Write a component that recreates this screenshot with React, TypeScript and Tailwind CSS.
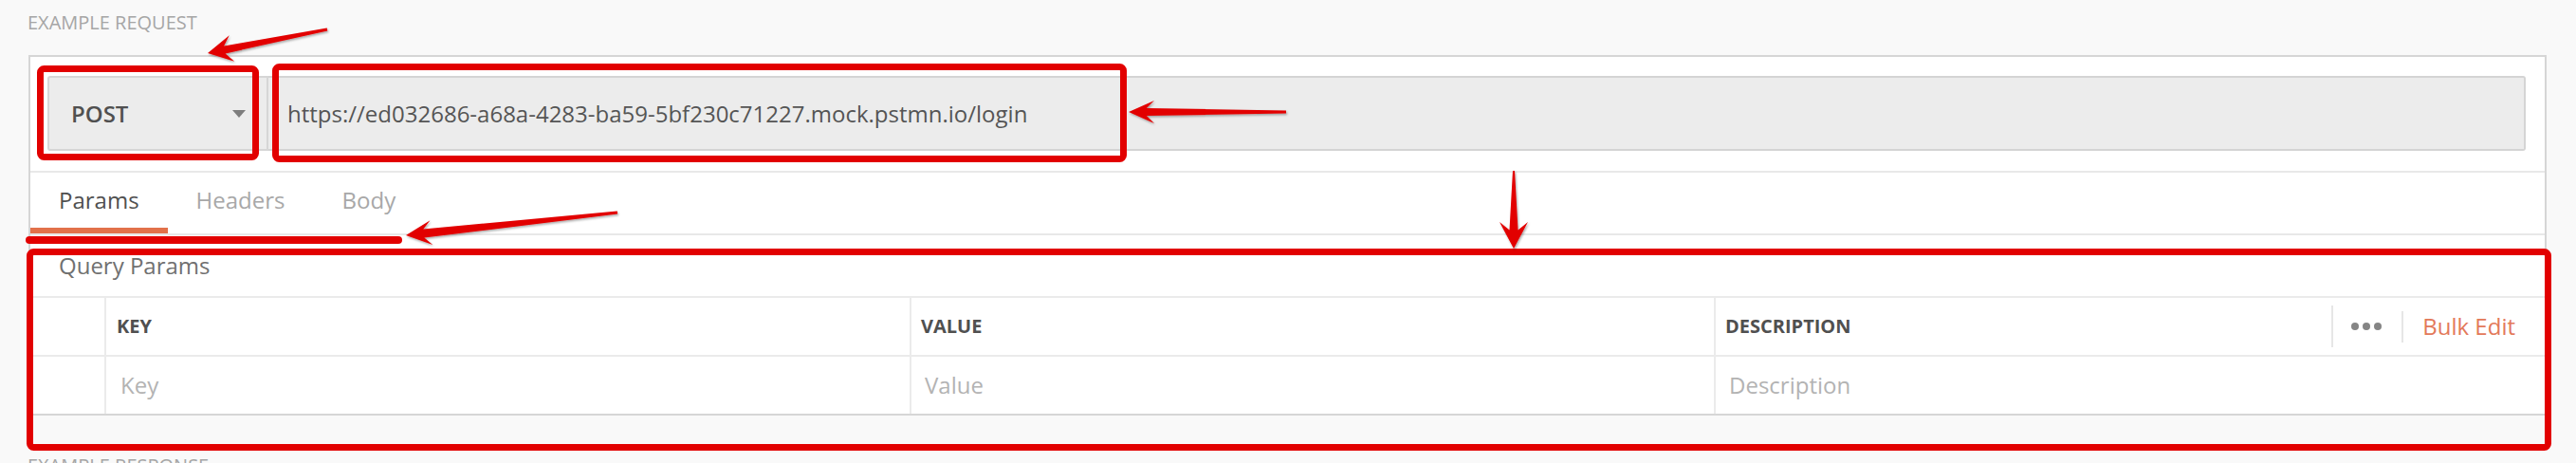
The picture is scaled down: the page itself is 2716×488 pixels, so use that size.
import React from "react";

type Pt = { x: number; y: number };

// tapered "swoosh" arrow, built from tail/tip and a few sizes
function arrowPoints(tail: Pt, tip: Pt, headLen: number, headHalf: number, neck: number, tailHalf: number) {
    const dx = tip.x - tail.x;
    const dy = tip.y - tail.y;
    const len = Math.hypot(dx, dy);
    const ux = dx / len;
    const uy = dy / len;
    const nx = -uy;
    const ny = ux;
    const bx = tip.x - ux * headLen;
    const by = tip.y - uy * headLen;
    const kx = tip.x - ux * headLen * 0.7;
    const ky = tip.y - uy * headLen * 0.7;
    const pts: [number, number][] = [
        [tip.x, tip.y],
        [bx + nx * headHalf, by + ny * headHalf],
        [kx + nx * neck, ky + ny * neck],
        [tail.x + nx * tailHalf, tail.y + ny * tailHalf],
        [tail.x - nx * tailHalf, tail.y - ny * tailHalf],
        [kx - nx * neck, ky - ny * neck],
        [bx - nx * headHalf, by - ny * headHalf],
    ];
    return pts.map(([x, y]) => `${x.toFixed(1)},${y.toFixed(1)}`).join(" ");
}

const ARROWS = [
    { tail: { x: 345, y: 31 }, tip: { x: 219, y: 56 }, head: 26, half: 14, neck: 4, tailHalf: 1.5 },
    { tail: { x: 1356, y: 118 }, tip: { x: 1190, y: 118 }, head: 27, half: 12, neck: 4, tailHalf: 1.5 },
    { tail: { x: 651, y: 224 }, tip: { x: 428, y: 248 }, head: 27, half: 13, neck: 4.5, tailHalf: 1.5 },
    { tail: { x: 1596, y: 180 }, tip: { x: 1596, y: 262 }, head: 28, half: 15, neck: 4.5, tailHalf: 1 },
];

function Annotations() {
    return (
        <svg
            className="pointer-events-none absolute left-0 top-0"
            width={2716}
            height={488}
            viewBox="0 0 2716 488"
        >
            <defs>
                <filter id="shade" x="-10%" y="-50%" width="120%" height="200%">
                    <feDropShadow dx="1" dy="1.5" stdDeviation="1" floodColor="#000" floodOpacity="0.35" />
                </filter>
            </defs>
            <g fill="none" stroke="#e20000" strokeWidth={7}>
                <rect x={42.5} y={72.5} width={227} height={93} rx={4} />
                <rect x={290.5} y={70.5} width={894} height={97} rx={4} />
                <rect x={31.5} y={265.5} width={2655} height={206} rx={4} />
            </g>
            <line x1={31} y1={253} x2={420} y2={253} stroke="#e20000" strokeWidth={8} strokeLinecap="round" />
            <g fill="#e20000" filter="url(#shade)">
                {ARROWS.map((a, i) => (
                    <polygon key={i} points={arrowPoints(a.tail, a.tip, a.head, a.half, a.neck, a.tailHalf)} />
                ))}
            </g>
        </svg>
    );
}

function Tab({ label, active }: { label: string; active?: boolean }) {
    return (
        <div
            className={`flex h-[64px] items-center border-b-[6px] px-[30px] ${
                active ? "border-[#e2714a] text-[#505050]" : "border-transparent text-[#a8a8a8]"
            }`}
        >
            {label}
        </div>
    );
}

export default function App() {
    return (
        <div className="relative h-[488px] w-[2716px] overflow-hidden bg-[#f9f9f9] font-['Open_Sans','Liberation_Sans',sans-serif]">
            <div className="pl-[29px] pt-[11px] text-[20px] leading-[26px] text-[#a6a6a6]">EXAMPLE REQUEST</div>

            <div className="ml-[30px] mt-[21px] w-[2655px] border-2 border-[#d6d6d6] bg-white">
                {/* method + url */}
                <div className="flex border-b-2 border-[#e8e8e8] pb-[21px] pl-[18px] pr-[20px] pt-[20px]">
                    <div className="flex h-[79px] w-[233px] items-center justify-between rounded-l-[3px] border-2 border-[#d6d6d6] bg-[#ececec] pl-[23px] pr-[22px]">
                        <span className="text-[24px] font-semibold text-[#505050]">POST</span>
                        <span className="h-0 w-0 border-l-[7.5px] border-r-[7.5px] border-t-[8px] border-l-transparent border-r-transparent border-t-[#7d7d7d]" />
                    </div>
                    <div className="flex h-[79px] flex-1 items-center rounded-r-[3px] border-2 border-l-0 border-[#d4d4d4] bg-[#ececec] pl-[20px]">
                        <span className="text-[24px] text-[#555555]">https://ed032686-a68a-4283-ba59-5bf230c71227.mock.pstmn.io/login</span>
                    </div>
                </div>

                {/* tabs */}
                <div className="flex border-b-2 border-[#e8e8e8] text-[24px]">
                    <Tab label="Params" active />
                    <Tab label="Headers" />
                    <Tab label="Body" />
                </div>

                <div className="h-[64px] pl-[30px] pt-[15px] text-[24px] leading-[33px] text-[#707070]">Query Params</div>

                {/* params table */}
                <div className="border-t-2 border-[#ebebeb]">
                    <div className="flex h-[62px] border-b-2 border-[#ebebeb] text-[20px] font-bold text-[#505050]">
                        <div className="w-[80px] border-r-2 border-[#ebebeb]" />
                        <div className="flex w-[849px] items-center border-r-2 border-[#ebebeb] pl-[11px]">KEY</div>
                        <div className="flex w-[848px] items-center border-r-2 border-[#ebebeb] pl-[10px]">VALUE</div>
                        <div className="flex flex-1 items-center pl-[10px]">
                            <span>DESCRIPTION</span>
                            <div className="ml-auto flex items-center">
                                <div className="h-[44px] w-[2px] bg-[#e6e6e6]" />
                                <div className="flex gap-[4px] pl-[19px] pr-[21px]">
                                    <span className="h-[8px] w-[8px] rounded-full bg-[#858585]" />
                                    <span className="h-[8px] w-[8px] rounded-full bg-[#858585]" />
                                    <span className="h-[8px] w-[8px] rounded-full bg-[#858585]" />
                                </div>
                                <div className="h-[33px] w-[2px] bg-[#e6e6e6]" />
                                <span className="pl-[20px] pr-[31px] text-[24px] font-normal text-[#e3795a]">Bulk Edit</span>
                            </div>
                        </div>
                    </div>
                    <div className="flex h-[60px] text-[24px] text-[#b3b3b3]">
                        <div className="w-[80px] border-r-2 border-[#ebebeb]" />
                        <div className="flex w-[849px] items-center border-r-2 border-[#ebebeb] pl-[15px]">Key</div>
                        <div className="flex w-[848px] items-center border-r-2 border-[#ebebeb] pl-[14px]">Value</div>
                        <div className="flex flex-1 items-center pl-[14px]">Description</div>
                    </div>
                </div>
            </div>

            <div className="pl-[29px] pt-[40px] text-[20px] leading-[26px] text-[#a6a6a6]">EXAMPLE RESPONSE</div>

            <Annotations />
        </div>
    );
}
